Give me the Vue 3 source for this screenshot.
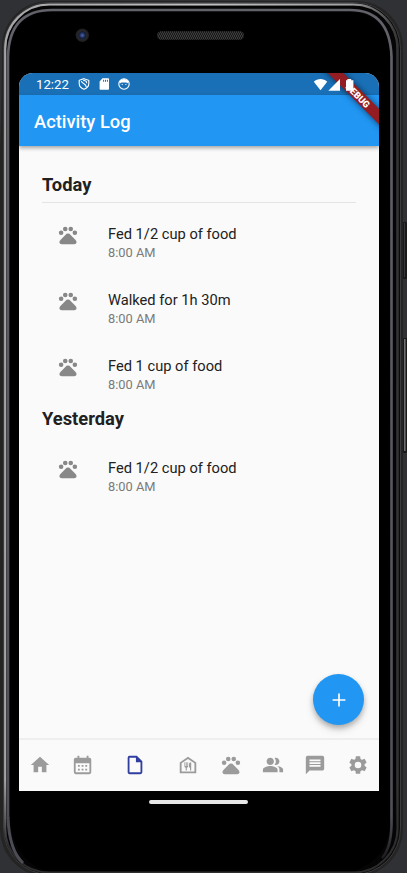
<script setup>
const paw = 'M4.5 7a2.5 2.5 0 1 0 0 5a2.5 2.5 0 1 0 0-5M9 3a2.5 2.5 0 1 0 0 5a2.5 2.5 0 1 0 0-5M15 3a2.5 2.5 0 1 0 0 5a2.5 2.5 0 1 0 0-5M19.5 7a2.5 2.5 0 1 0 0 5a2.5 2.5 0 1 0 0-5M14.9 11.9C13.2 10 10.8 10 9.1 11.9L4 17.3C1.8 19.6 2.5 22 5.2 22H18.8C21.5 22 22.2 19.6 20 17.3z'
const groups = [
  { day: 'Today', ruled: true, items: ['Fed 1/2 cup of food', 'Walked for 1h 30m', 'Fed 1 cup of food'] },
  { day: 'Yesterday', ruled: false, items: ['Fed 1/2 cup of food'] },
]
const tabs = [
  { id: 'home', d: 'M10 20v-6h4v6h5v-8h3L12 3 2 12h3v8z' },
  { id: 'calendar', d: 'M19 4h-1V2h-2v2H8V2H6v2H4a2 2 0 0 0-2 2v14a2 2 0 0 0 2 2h15a2 2 0 0 0 2-2V6a2 2 0 0 0-2-2zm0 16H4V10h15zM8.5 14h-2v-2h2zm4 0h-2v-2h2zm4 0h-2v-2h2zm-8 4h-2v-2h2zm4 0h-2v-2h2zm4 0h-2v-2h2z' },
  { id: 'log', active: true, d: 'M14 2H6a2 2 0 0 0-2 2v16c0 1.1.89 2 1.99 2H18a2 2 0 0 0 2-2V8zM6 20V4h7v5h5v11z' },
  { id: 'meals', d: 'M12 3L3 9.2V21h18V9.2zM19 19H5v-8.8l7-4.8 7 4.8zM11.3 9v4h-.7V9h-.9v4H9V9h-.9v4.2c0 1 .6 1.7 1.4 1.9V18h1.2v-2.9c.8-.2 1.4-.9 1.4-1.9V9zM13 11.2v3.5h1.2V18h1.3V9c-1.4 0-2.5 1-2.5 2.2z' },
  { id: 'pets', d: paw },
  { id: 'people', d: 'M16.67 13.13C18.04 14.06 19 15.32 19 17v3h4v-3c0-2.18-3.57-3.47-6.33-3.87zM15 12c2.21 0 4-1.79 4-4s-1.79-4-4-4c-.47 0-.91.1-1.33.24a5.98 5.98 0 0 1 0 7.52c.42.14.86.24 1.33.24zM9 12c2.21 0 4-1.79 4-4s-1.79-4-4-4-4 1.79-4 4 1.79 4 4 4zm0 1c-2.67 0-8 1.34-8 4v3h16v-3c0-2.66-5.33-4-8-4z' },
  { id: 'chat', d: 'M20 2H4c-1.1 0-1.99.9-1.99 2L2 22l4-4h14c1.1 0 2-.9 2-2V4c0-1.1-.9-2-2-2zm-2 12H6v-2h12zm0-3H6V9h12zm0-3H6V6h12z' },
  { id: 'settings', d: 'M19.14 12.94c.04-.3.06-.61.06-.94 0-.32-.02-.64-.07-.94l2.03-1.58c.18-.14.23-.41.12-.61l-1.92-3.32c-.12-.22-.37-.29-.59-.22l-2.39.96c-.5-.38-1.03-.7-1.62-.94l-.36-2.54c-.04-.24-.24-.41-.48-.41h-3.84c-.24 0-.43.17-.47.41l-.36 2.54c-.59.24-1.13.57-1.62.94l-2.39-.96c-.22-.08-.47 0-.59.22L2.74 8.87c-.12.21-.08.47.12.61l2.03 1.58c-.05.3-.09.63-.09.94s.02.64.07.94l-2.03 1.58c-.18.14-.23.41-.12.61l1.92 3.32c.12.22.37.29.59.22l2.39-.96c.5.38 1.03.7 1.62.94l.36 2.54c.05.24.24.41.48.41h3.84c.24 0 .44-.17.47-.41l.36-2.54c.59-.24 1.13-.56 1.62-.94l2.39.96c.22.08.47 0 .59-.22l1.92-3.32c.12-.22.07-.47-.12-.61zM12 15.6A3.6 3.6 0 1 1 12 8.4a3.6 3.6 0 0 1 0 7.2z' },
]
</script>

<template>
  <main class="stage">
    <svg class="frame" viewBox="0 0 407 873" aria-hidden="true">
      <defs>
        <linearGradient id="rim" x1="0" y1="0" x2="1" y2="0">
          <stop offset="0" stop-color="#a5a5a8" />
          <stop offset=".5" stop-color="#c2c2c4" />
          <stop offset=".88" stop-color="#a2a2a4" />
          <stop offset=".98" stop-color="#48484a" />
          <stop offset="1" stop-color="#343436" />
        </linearGradient>
        <linearGradient id="bezel" x1="0" y1="0" x2="0" y2="1">
          <stop offset="0" stop-color="#62626a" />
          <stop offset=".95" stop-color="#505058" />
          <stop offset="1" stop-color="#1c1c20" />
        </linearGradient>
        <linearGradient id="fade" gradientUnits="userSpaceOnUse" x1="0" y1="780" x2="0" y2="845">
          <stop offset="0" stop-color="#fff" />
          <stop offset="1" stop-color="#000" />
        </linearGradient>
        <mask id="upper" maskUnits="userSpaceOnUse" x="0" y="0" width="407" height="873">
          <rect width="407" height="873" fill="url(#fade)" />
        </mask>
        <pattern id="mesh" width="4" height="4" patternUnits="userSpaceOnUse">
          <rect width="4" height="4" fill="#191919" />
          <path d="M0 0l2 2-2 2M2 0l2 2-2 2" fill="none" stroke="#454545" stroke-width=".8" />
        </pattern>
        <radialGradient id="lens">
          <stop offset="0" stop-color="#526ab0" />
          <stop offset=".3" stop-color="#263568" />
          <stop offset=".55" stop-color="#101a35" />
          <stop offset=".65" stop-color="#29292b" />
          <stop offset="1" stop-color="#1b1b1c" />
        </radialGradient>
      </defs>
      <rect x="403" y="222" width="4" height="57" rx="1" fill="#18191a" />
      <path d="M404.5 223v54" stroke="#353638" />
      <rect x="403" y="338" width="4" height="115" rx="1" fill="#18191a" />
      <path d="M404.8 339v112" stroke="#77787b" stroke-width="1.4" />
      <path d="M0 828V150Q2 100 2 47A46 46 0 0 1 48 1H357A46 46 0 0 1 403 47V828A48 48 0 0 1 355 877H48A48 48 0 0 1 0 828z" fill="#242424" />
      <rect x="3.5" y="2.5" width="397" height="872" rx="46" fill="#0c0c0c" stroke="#3c3c3e" />
      <rect x="5.2" y="4.5" width="392.3" height="868" rx="44" fill="#050505" stroke="#2e2e30" stroke-width="2" />
      <rect x="5.2" y="4.5" width="392.3" height="868" rx="44" fill="none" stroke="url(#rim)" stroke-width="2.2" mask="url(#upper)" />
      <path d="M8 818V57Q9 10 52 10H350Q390 10 391.5 57V825Q391 848 382 858" fill="none" stroke="url(#bezel)" stroke-width="2.6" />
      <path d="M8 817Q9 850 23 863" fill="none" stroke="#4c4c54" stroke-width="3" />
      <path d="M10 58Q11 12 52 12H348Q388 12 390 58V825Q388 858 355 871H45Q12 858 10 818z" fill="#000" />
      <circle cx="82.3" cy="35.3" r="6.7" fill="url(#lens)" />
      <rect x="157" y="31.3" width="87" height="8.4" rx="4.2" fill="url(#mesh)" />
    </svg>

    <section class="screen">
      <div class="status">
        <span class="clock">12:22</span>
        <svg class="s-icon" viewBox="0 0 12 12"><path d="M6 .7l4.8 1.6v3.2c0 2.7-2 4.7-4.8 5.8-2.8-1.1-4.8-3.1-4.8-5.8V2.3zM3.4 3c0 2.8 5 2.3 4.8 6M5.2 2.6c2.5-.3 3.6 1 3.4 2.6" fill="none" stroke="#fff" stroke-width="1.1" /></svg>
        <svg class="s-icon" viewBox="0 0 12 12"><path fill="#fff" fill-rule="evenodd" d="M4.5.2h5.7q.8 0 .8.8v10q0 .8-.8.8H2.4q-.8 0-.8-.8V3.5zM5.1 1.7v2h1v-2zm1.9 0v2h1v-2zm1.9 0v2h1v-2z" /></svg>
        <svg class="s-icon" viewBox="0 0 12 12"><circle cx="6" cy="6" r="5.2" fill="none" stroke="#fff" stroke-width="1.1" /><path fill="#fff" d="M1.4 3.7C3.5.1 8.5.1 10.6 3.7L9.6 5.2 8.2 4.4 3.4 4.4 1.9 5.6zM3.7 6h1v1h-1zM7.4 6h1v1h-1z" /></svg>
      </div>
      <header class="appbar">Activity Log</header>

      <div class="content">
        <section v-for="group in groups" :key="group.day" class="group">
          <h2 :class="{ ruled: group.ruled }">{{ group.day }}</h2>
          <article v-for="item in group.items" :key="item" class="entry">
            <svg class="icon" viewBox="0 0 24 24"><path :d="paw" /></svg>
            <div>
              <p class="what">{{ item }}</p>
              <p class="when">8:00 AM</p>
            </div>
          </article>
        </section>
      </div>

      <nav class="tabs">
        <span v-for="tab in tabs" :key="tab.id" class="tab" :class="{ active: tab.active }">
          <svg class="icon" viewBox="0 0 24 24"><path :d="tab.d" :fill-rule="tab.id === 'pets' ? 'nonzero' : 'evenodd'" /></svg>
        </span>
      </nav>

      <button class="fab" aria-label="Add">
        <svg viewBox="0 0 24 24"><path d="M19 12.9h-6.1V19h-1.8v-6.1H5v-1.8h6.1V5h1.8v6.1H19z" /></svg>
      </button>
      <div class="ribbon"><span>DEBUG</span></div>
      <svg class="signals" viewBox="0 0 42 14">
        <path d="M.8 3.8C4.5.2 10.5.2 14.2 3.8L7.5 12.3z" />
        <path d="M27 1v11.7H15.3z" />
        <path d="M34.4 1h3.8v1.2h2.2v10.5h-7.4V2.2h1.4z" />
      </svg>
    </section>
    <div class="handle"></div>
  </main>
</template>

<style>
body {
  background: #303134;
}
</style>

<style scoped>
.stage {
  position: relative;
  box-sizing: border-box;
  width: 407px;
  height: 873px;
  padding: 73px 28px 0 19px;
  overflow: hidden;
  background: #303134;
  font-family: Roboto, "Liberation Sans", sans-serif;
}
.frame {
  position: absolute;
  inset: 0;
  width: 407px;
  height: 873px;
}
.screen {
  position: relative;
  display: flex;
  flex-direction: column;
  width: 360px;
  height: 718px;
  overflow: hidden;
  border-radius: 14px 14px 0 0;
  background: #fafafa;
}
.status {
  display: flex;
  align-items: center;
  flex: none;
  height: 22px;
  padding-left: 17px;
  background: #1a70b7;
  color: #fff;
}
.clock {
  width: 41.5px;
  font-size: 13.2px;
}
.s-icon {
  width: 12px;
  height: 12px;
  margin-right: 8.2px;
}
.appbar {
  z-index: 1;
  flex: none;
  height: 51px;
  padding-left: 15px;
  background: #2196f3;
  box-shadow: 0 2px 4px rgba(0, 0, 0, 0.35);
  color: #fff;
  font-size: 18.33px;
  font-weight: 500;
  line-height: 53px;
}
.content {
  flex: 1;
  padding: 22px 23px 0;
}
h2 {
  box-sizing: border-box;
  height: 35px;
  margin: 0;
  color: #212121;
  font-size: 18.33px;
  font-weight: 700;
  line-height: 34px;
}
.group + .group {
  padding-top: 1px;
}
.ruled {
  border-bottom: 1px solid #e4e4e4;
}
.entry {
  display: flex;
  align-items: flex-start;
  height: 46px;
  padding: 20px 0 0 15px;
}
.icon {
  display: block;
  width: 22px;
  height: 22px;
  fill: #888;
}
.entry > .icon {
  margin: 1px 29px 0 0;
}
p {
  margin: 0;
}
.what {
  color: #212121;
  font-size: 14.67px;
  line-height: 22px;
}
.when {
  color: #7b7b7b;
  font-size: 12.83px;
  line-height: 16px;
}
.tabs {
  display: flex;
  flex: none;
  box-sizing: border-box;
  height: 53px;
  padding-bottom: 2px;
  border-top: 2px solid #eeeeef;
}
.tab {
  display: flex;
  align-items: center;
  justify-content: center;
  width: 42.4px;
}
.tab.active {
  width: 63.4px;
}
.tab .icon {
  fill: #9b9b9b;
}
.tab.active .icon {
  fill: #303f9f;
}
.fab {
  position: absolute;
  right: 15px;
  bottom: 66px;
  display: flex;
  align-items: center;
  justify-content: center;
  width: 51px;
  height: 51px;
  padding: 0;
  border: 0;
  border-radius: 50%;
  background: #2196f3;
  box-shadow: 0 3px 5px rgba(0, 0, 0, 0.22), 0 5px 9px rgba(0, 0, 0, 0.13);
}
.fab svg {
  width: 22px;
  height: 22px;
  fill: #fff;
}
.ribbon {
  position: absolute;
  z-index: 2;
  top: 16.5px;
  right: -24px;
  display: flex;
  align-items: center;
  justify-content: center;
  width: 90px;
  height: 11px;
  transform: rotate(45deg);
  background: #931d23;
  box-shadow: 0 0 6px rgba(0, 0, 0, 0.6);
  color: #fff;
  font-size: 9.3px;
  font-weight: 900;
}
.signals {
  position: absolute;
  z-index: 3;
  top: 4.5px;
  right: 23.7px;
  width: 42px;
  height: 14px;
  fill: #fff;
}
.handle {
  position: relative;
  width: 99px;
  height: 4px;
  margin: 9px 0 0 130px;
  border-radius: 2px;
  background: #e8e8e8;
}
</style>
